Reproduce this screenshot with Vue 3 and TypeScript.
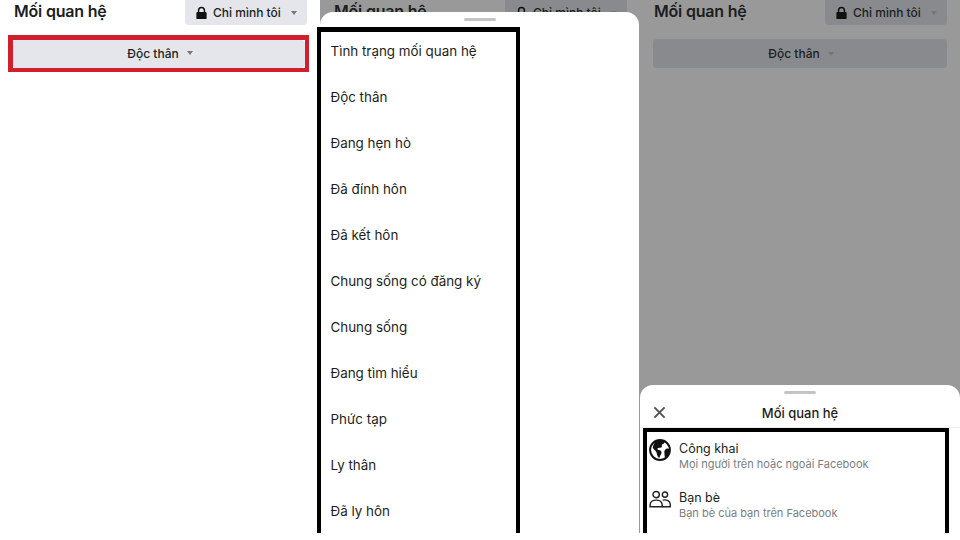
<script setup lang="ts">
const statuses: string[] = [
  'Tình trạng mối quan hệ',
  'Độc thân',
  'Đang hẹn hò',
  'Đã đính hôn',
  'Đã kết hôn',
  'Chung sống có đăng ký',
  'Chung sống',
  'Đang tìm hiểu',
  'Phức tạp',
  'Ly thân',
  'Đã ly hôn',
]
</script>

<template>
  <div class="page">
    <section class="phone">
      <div class="head">
        <h2 class="title">Mối quan hệ</h2>
        <div class="privacy">
          <svg class="lock" viewBox="0 0 12 14"><path d="M2 6V4.200a4 4 0 0 1 8 0V6h.6c.6 0 1 .4 1 1v5.600c0 .6-.4 1-1 1H1.400c-.6 0-1-.4-1-1V7c0-.6.4-1 1-1H2zm1.600 0h4.800V4.200a2.400 2.400 0 0 0-4.800 0V6z" /></svg>
          <span>Chỉ mình tôi</span>
          <i class="caret"></i>
        </div>
      </div>
      <div class="select-wrap marked">
        <div class="select"><span>Độc thân</span><i class="caret"></i></div>
      </div>
    </section>

    <section class="phone dim open">
      <div class="head">
        <h2 class="title">Mối quan hệ</h2>
        <div class="privacy">
          <svg class="lock" viewBox="0 0 12 14"><path d="M2 6V4.200a4 4 0 0 1 8 0V6h.6c.6 0 1 .4 1 1v5.600c0 .6-.4 1-1 1H1.400c-.6 0-1-.4-1-1V7c0-.6.4-1 1-1H2zm1.600 0h4.800V4.200a2.400 2.400 0 0 0-4.800 0V6z" /></svg>
          <span>Chỉ mình tôi</span>
          <i class="caret"></i>
        </div>
      </div>
      <div class="sheet tall">
        <div class="grabber"></div>
        <ul class="status-list">
          <li v-for="s in statuses" :key="s">{{ s }}</li>
        </ul>
      </div>
    </section>

    <section class="phone dim">
      <div class="head">
        <h2 class="title">Mối quan hệ</h2>
        <div class="privacy">
          <svg class="lock" viewBox="0 0 12 14"><path d="M2 6V4.200a4 4 0 0 1 8 0V6h.6c.6 0 1 .4 1 1v5.600c0 .6-.4 1-1 1H1.400c-.6 0-1-.4-1-1V7c0-.6.4-1 1-1H2zm1.600 0h4.800V4.200a2.400 2.400 0 0 0-4.800 0V6z" /></svg>
          <span>Chỉ mình tôi</span>
          <i class="caret"></i>
        </div>
      </div>
      <div class="select-wrap">
        <div class="select"><span>Độc thân</span><i class="caret"></i></div>
      </div>
      <div class="sheet short">
        <div class="grabber"></div>
        <div class="sheet-head">
          <svg class="close" viewBox="0 0 14 14"><path d="M1.500 1.500l11 11M12.500 1.500l-11 11" /></svg>
          <span>Mối quan hệ</span>
        </div>
        <div class="audience">
          <div class="option">
            <svg class="opt-icon" viewBox="0 0 20 20"><circle cx="10" cy="10" r="9" class="globe" /><path d="M6 2.200c2.400-1.200 5.600-1.300 8-.2.300 1.400-.5 2.500-2 2.800-.8.800.2 1.800-.6 2.700-1.200.7-3 .2-3.800 1.200-.2 1 1 1.500 2.200 1.600 1.200.4 1.800 1.400 1.500 2.600-.5 1.600-1.700 2.600-1.800 4.600-1.500-1-2.200-2.800-2.500-4.500C7 11 4.500 10.200 3.400 8 3.800 5.800 4.500 3.800 6 2.200zM15.500 9c1.200-.6 2.500-.4 3 .4.200 3-1.200 6-3.600 7.700-1-1.200-.6-3-.9-4.300-.3-1.500.2-3 1.500-3.800z" class="land" /></svg>
            <div class="opt-text"><strong>Công khai</strong><small>Mọi người trên hoặc ngoài Facebook</small></div>
          </div>
          <div class="option">
            <svg class="opt-icon" viewBox="0 0 20 20"><g class="friends"><circle cx="6.500" cy="6" r="2.900" /><circle cx="14.500" cy="6" r="2.400" /><path d="M1 17v-1.500c0-2.800 2.500-4.500 5.500-4.500s5.500 1.700 5.500 4.500V17z" /><path d="M12.500 11c3.500-.8 6.800.8 6.800 3.800V17H12" /></g></svg>
            <div class="opt-text"><strong>Bạn bè</strong><small>Bạn bè của bạn trên Facebook</small></div>
          </div>
        </div>
      </div>
    </section>
  </div>
</template>

<style scoped>
.page {
  display: grid;
  grid-template-columns: repeat(3, 320px);
  width: 960px;
  height: 540px;
  overflow: hidden;
  background: #fff;
  font-family: Inter, "Liberation Sans", Arial, sans-serif;
  color: #1c1e21;
}
.phone {
  position: relative;
  height: 533px;
  overflow: hidden;
  background: #fff;
}
.phone.dim {
  background: #999;
}
.phone.open {
  overflow: visible;
}
.head {
  display: flex;
  justify-content: space-between;
  align-items: center;
  padding: 0 13px 0 14px;
  height: 25px;
}
.title {
  margin: 0 0 3px;
  font-size: 16px;
  font-weight: 600;
  letter-spacing: -0.2px;
}
.privacy {
  display: flex;
  align-items: center;
  gap: 6px;
  width: 122px;
  height: 25px;
  box-sizing: border-box;
  padding-left: 11px;
  border-radius: 0 0 4px 4px;
  background: #e4e6eb;
  font-size: 12px;
  font-weight: 500;
}
.dim .privacy {
  background: #898a8d;
}
.lock {
  width: 11px;
  height: 14px;
  fill: #111;
}
.caret {
  width: 0;
  height: 0;
  margin-left: 4px;
  border: 3.500px solid transparent;
  border-top: 4px solid #777;
  border-bottom: 0;
}
.select-wrap {
  margin: 14px 13px 0 13px;
}
.select-wrap.marked {
  margin: 10px 11px 0 8px;
  border: solid #d0202e;
  border-width: 5px 4px 4px 5px;
}
.select-wrap.marked .select {
  height: 28px;
  padding-bottom: 2px;
  box-sizing: border-box;
}
.select {
  display: flex;
  align-items: center;
  justify-content: center;
  gap: 6px;
  height: 29px;
  padding-left: 2px;
  border-radius: 4px;
  background: #e4e6eb;
  font-size: 12px;
  font-weight: 500;
}
.select .caret {
  margin-left: 2px;
}
.dim .select {
  background: #898a8d;
}
.sheet {
  position: absolute;
  left: 0;
  right: 0;
  bottom: 0;
  background: #fff;
  border-radius: 13px 13px 0 0;
}
.sheet.tall {
  top: 12px;
  right: 1px;
}
.sheet.short {
  top: 385px;
}
.grabber {
  width: 32px;
  height: 3px;
  margin: 6px auto 0;
  border-radius: 2px;
  background: #c4c4c4;
}
.status-list {
  box-sizing: border-box;
  width: 203px;
  height: 506px;
  margin: 6px 0 0 -3px;
  padding: 0 0 0 9.500px;
  list-style: none;
  border: solid #000;
  border-width: 5px 4px 0 4px;
  font-size: 13.400px;
}
.status-list li {
  display: flex;
  align-items: center;
  height: 46px;
}
.status-list li:first-child {
  margin-top: -4px;
}
.sheet-head {
  display: flex;
  align-items: center;
  justify-content: center;
  position: relative;
  height: 28px;
  margin-top: 6px;
  padding-bottom: 2px;
  box-sizing: border-box;
  border-bottom: 1px solid #eee;
  font-size: 13px;
  font-weight: 500;
}
.close {
  position: absolute;
  left: 13px;
  top: 6px;
  width: 13px;
  height: 13px;
  fill: none;
  stroke: #555;
  stroke-width: 2.200;
}
.audience {
  box-sizing: border-box;
  height: 106px;
  margin: -1px 11px 0 3px;
  padding: 7px 0 0 2px;
  border: solid #000;
  border-width: 5px 4px 0 4px;
}
.option {
  display: flex;
  gap: 8px;
  height: 49px;
}
.opt-icon {
  flex: none;
  width: 22px;
  height: 22px;
}
.globe {
  fill: #fff;
  stroke: #111;
  stroke-width: 1.800;
}
.land {
  fill: #111;
}
.friends {
  fill: none;
  stroke: #222;
  stroke-width: 1.300;
}
.opt-text {
  display: flex;
  flex-direction: column;
  margin-top: 2px;
}
.opt-text strong {
  font-size: 12.500px;
  font-weight: 400;
  line-height: 16px;
}
.opt-text small {
  font-size: 11px;
  line-height: 14px;
  color: #7a7d82;
}
</style>
